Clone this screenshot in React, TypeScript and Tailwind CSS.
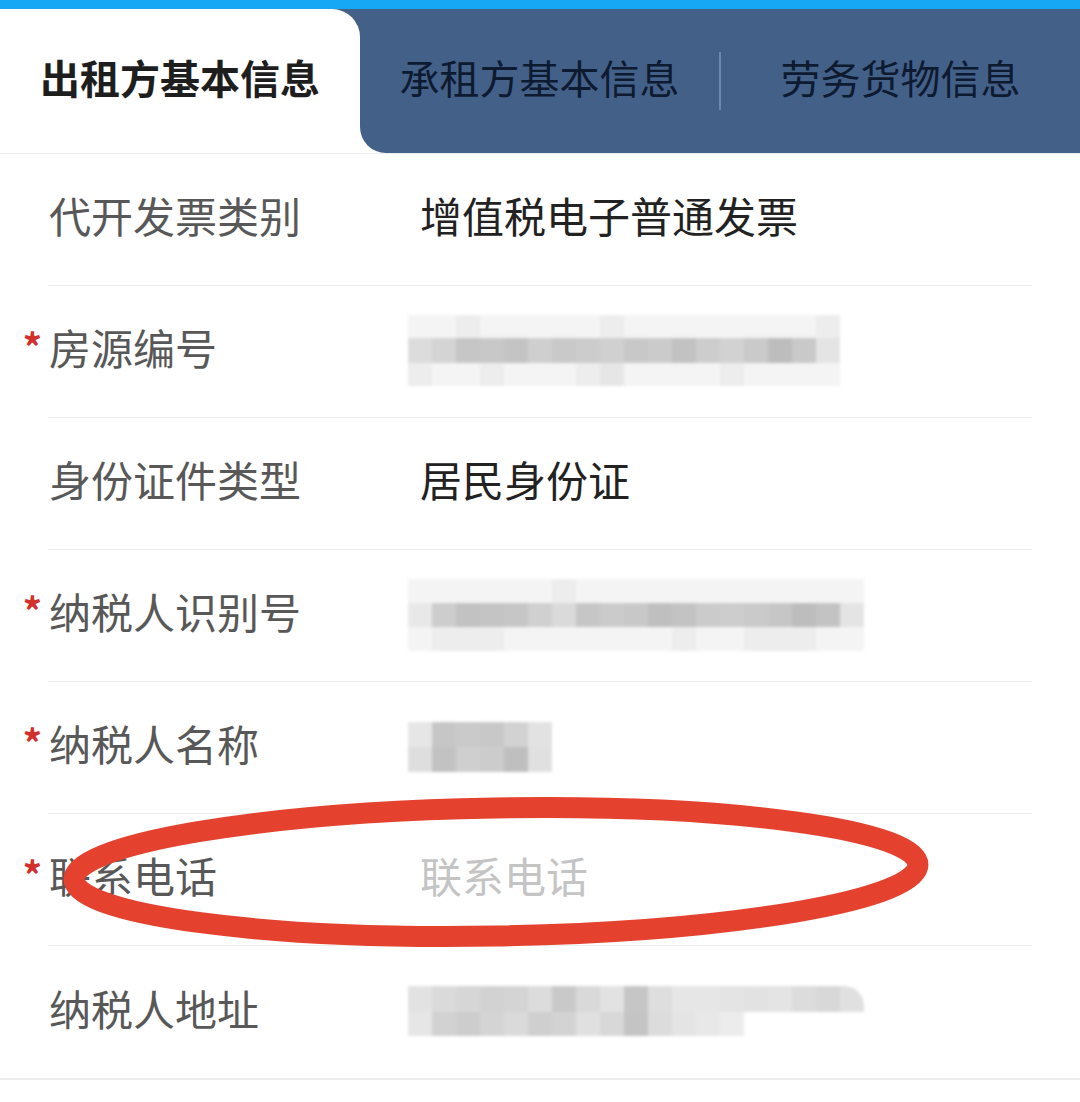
import React from 'react';

const font = { fontFamily: '"Noto Sans CJK SC", "Noto Sans", sans-serif' };

type Band = { h: number; cells: string[] };

// pixelated blur over private values
function Mosaic({ cell, bands, className = '' }: { cell: number; bands: Band[]; className?: string }) {
    return (
        <div className={`flex flex-col blur-[1.5px] ${className}`}>
            {bands.map((b, i) => (
                <div key={i} className="flex">
                    {b.cells.map((c, j) => (
                        <div key={j} style={{ width: cell, height: b.h, background: c }} />
                    ))}
                </div>
            ))}
        </div>
    );
}

const L1 = '#f4f4f4';
const L2 = '#ededed';

const rows = [
    { label: '代开发票类别', req: false, value: <span className="text-[#222]">增值税电子普通发票</span> },
    {
        label: '房源编号',
        req: true,
        value: (
            <Mosaic
                cell={24}
                className="-ml-[12px] mt-[8px]"
                bands={[
                    { h: 23, cells: [L1, L1, L2, L1, L1, L1, L1, L1, L2, L1, L1, L1, L1, L1, L1, L1, L1, L2] },
                    { h: 25, cells: ['#dcdcdc', '#d4d4d4', '#c6c6c6', '#c8c8c8', '#c4c4c4', '#cfcfcf', '#c9c9c9', '#cccccc', '#d0d0d0', '#c8c8c8', '#cbcbcb', '#c2c2c2', '#cdcdcd', '#d2d2d2', '#cacaca', '#bdbdbd', '#c9c9c9', '#e4e4e4'] },
                    { h: 23, cells: [L2, L1, L1, L2, L1, L1, L1, L2, '#e6e6e6', L1, L1, L1, L1, L2, L1, L1, L1, L1] },
                ]}
            />
        ),
    },
    { label: '身份证件类型', req: false, value: <span className="text-[#222]">居民身份证</span> },
    {
        label: '纳税人识别号',
        req: true,
        value: (
            <Mosaic
                cell={24}
                className="-ml-[12px] mt-[8px]"
                bands={[
                    { h: 24, cells: [L1, L1, L1, L1, L1, L1, L2, L1, L1, L1, L1, L1, L1, L1, L1, L1, L1, L1, L1] },
                    { h: 24, cells: ['#e8e8e8', '#cdcdcd', '#c2c2c2', '#c4c4c4', '#c6c6c6', '#d0d0d0', '#dadada', '#c6c6c6', '#cbcbcb', '#c8c8c8', '#bfbfbf', '#c3c3c3', '#cbcbcb', '#cdcdcd', '#cacaca', '#c6c6c6', '#bdbdbd', '#c3c3c3', '#e4e4e4'] },
                    { h: 24, cells: [L1, L2, L2, L2, L1, L1, L1, L1, L1, L1, L1, L2, L1, L1, L2, L2, L2, L1, L1] },
                ]}
            />
        ),
    },
    {
        label: '纳税人名称',
        req: true,
        value: (
            <Mosaic
                cell={24}
                className="-ml-[12px] mt-[8px]"
                bands={[
                    { h: 25, cells: ['#e6e6e6', '#c6c6c6', '#cacaca', '#c8c8c8', '#d2d2d2', '#e2e2e2'] },
                    { h: 25, cells: ['#dedede', '#c2c2c2', '#cfcfcf', '#cccccc', '#bfbfbf', '#e0e0e0'] },
                ]}
            />
        ),
    },
    { label: '联系电话', req: true, value: <span className="text-[#c4c4c4]">联系电话</span> },
    {
        label: '纳税人地址',
        req: false,
        value: (
            <Mosaic
                cell={24}
                className="-ml-[12px] mt-[8px] rounded-r-[20px] overflow-hidden"
                bands={[
                    { h: 26, cells: ['#e2e2e2', '#dadada', '#d6d6d6', '#d2d2d2', '#d4d4d4', '#dcdcdc', '#c9c9c9', '#d9d9d9', '#e2e2e2', '#c6c6c6', '#dedede', '#e6e6e6', '#e6e6e6', '#e4e4e4', '#e2e2e2', '#e4e4e4', '#dcdcdc', '#d8d8d8', '#e0e0e0'] },
                    { h: 24, cells: ['#e6e6e6', '#d2d2d2', '#cdcdcd', '#d4d4d4', '#dadada', '#cfcfcf', '#d3d3d3', '#e0e0e0', '#d8d8d8', '#c4c4c4', '#dcdcdc', '#e4e4e4', '#e8e8e8', '#ececec', '#ffffff', '#ffffff', '#ffffff', '#ffffff', '#ffffff'] },
                ]}
            />
        ),
    },
];

export default function App() {
    return (
        <div className="relative w-[1080px] h-[1102px] bg-white overflow-hidden" style={font}>
            {/* top status strip */}
            <div className="h-[9px] bg-[#16a8f4]"></div>

            {/* TABS */}
            <div className="flex h-[144px]">
                <div className="w-[360px] bg-[#436089]">
                    <div className="h-full pb-[8px] bg-white rounded-tr-[28px] flex items-center justify-center text-[40px] font-bold text-[#1e1e1e]">
                        出租方基本信息
                    </div>
                </div>
                <div className="flex-1 pb-[8px] bg-[#436089] rounded-bl-[26px] flex items-center text-[40px] text-[#0e1a30]">
                    <div className="flex-1 text-center">承租方基本信息</div>
                    <div className="w-[2px] h-[58px] mt-[8px] bg-[#6d88ae]"></div>
                    <div className="flex-1 text-center">劳务货物信息</div>
                </div>
            </div>
            <div className="h-px bg-[#efefef]"></div>

            {/* FORM ROWS */}
            {rows.map((r, i) => (
                <div key={i} className="flex">
                    <div className="w-[48px] flex items-center justify-end pr-[6px] pb-[14px] text-[38px] font-bold text-[#d1302c]">
                        {r.req ? '*' : ''}
                    </div>
                    <div
                        className={`flex-1 h-[132px] pb-[10px] flex items-center text-[42px] ${i === rows.length - 1 ? '' : 'mr-[48px] border-b border-[#ededed]'}`}
                    >
                        <div className="w-[372px] pl-[1px] text-[#585858]">{r.label}</div>
                        <div className="flex-1 flex items-center">{r.value}</div>
                    </div>
                </div>
            ))}
            <div className="h-[2px] bg-[#eeeeee]"></div>

            {/* red annotation ellipse */}
            <svg className="absolute left-[62px] top-[796px] pointer-events-none" width="874" height="154" viewBox="0 0 874 154">
                <ellipse
                    cx="434"
                    cy="76"
                    rx="422"
                    ry="64"
                    fill="none"
                    stroke="#e4412f"
                    strokeWidth="21"
                    transform="rotate(-1 434 76)"
                />
            </svg>
        </div>
    );
}
